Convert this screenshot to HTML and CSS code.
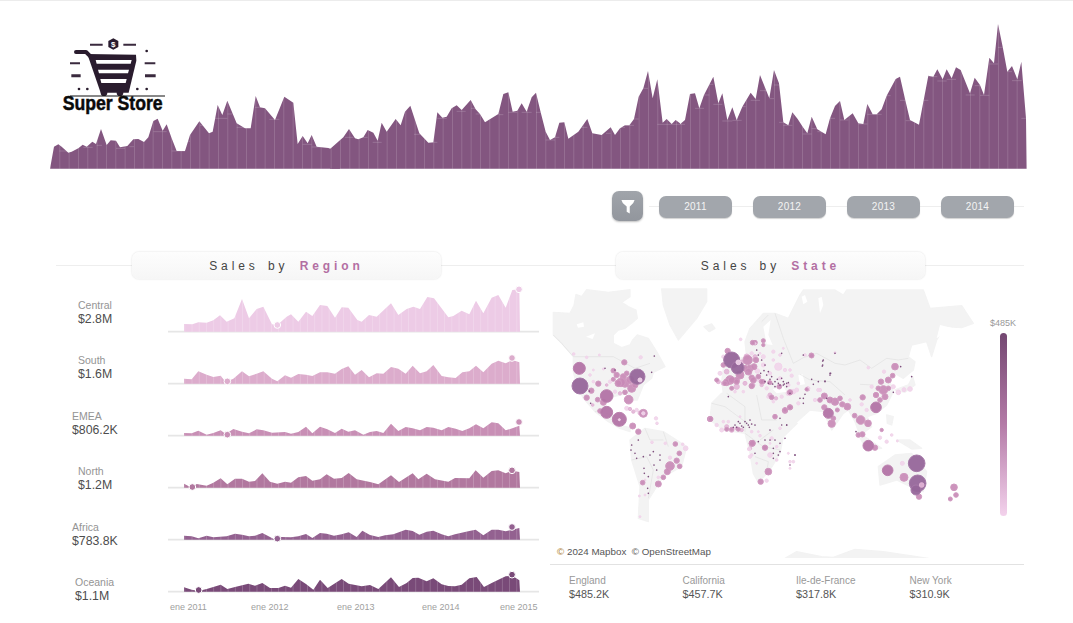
FILE: index.html
```html
<!DOCTYPE html>
<html lang="es">
<head>
<meta charset="utf-8">
<title>Super Store Sales</title>
<link rel="stylesheet" href="styles.css">
</head>
<body>
<svg class="defs" width="0" height="0" aria-hidden="true">
  <defs>
    <pattern id="weekLines" patternUnits="userSpaceOnUse" width="28" height="10" x="2">
      <rect width="2.6" height="10" fill="#fff" fill-opacity=".16"/>
    </pattern>
    <pattern id="monthLines" patternUnits="userSpaceOnUse" width="21.65" height="10" x="5">
      <rect width="2.6" height="10" fill="#fff" fill-opacity=".2"/>
    </pattern>
    <polygon id="s1" points="372,140 372,117 397,118 415,112 440,113 460,106 480,91 500,110 523,100 546,42 567,100 590,72 610,65 636,118 652,120 680,95 693,88 715,110 738,80 757,93 780,60 802,63 825,98 845,67 865,68 892,105 905,110 927,90 950,95 993,55 1015,90 1040,72 1060,65 1080,72 1102,36 1122,40 1165,97 1180,93 1205,77 1228,88 1248,47 1270,85 1295,38 1315,30 1337,68 1357,15 1378,13 1380,140"/>
    <polygon id="s2" points="372,295 372,280 395,282 415,258 440,268 460,275 482,271 497,290 520,280 546,258 567,273 590,265 610,258 636,280 652,288 675,270 693,277 715,266 738,268 757,272 780,261 802,261 825,265 845,251 865,243 885,268 905,254 927,276 950,264 970,265 993,245 1015,250 1037,265 1058,241 1080,264 1100,258 1120,239 1145,272 1165,276 1187,278 1207,261 1228,258 1248,241 1270,261 1295,235 1315,226 1337,234 1357,224 1378,231 1380,295"/>
    <polygon id="s3" points="372,452 372,444 395,445 415,437 440,449 460,444 482,436 497,447 520,432 546,440 567,445 590,433 610,436 636,443 675,441 693,446 715,441 738,425 757,445 780,425 802,433 825,444 845,431 865,440 885,436 910,449 930,441 950,438 970,444 993,416 1015,438 1037,426 1058,430 1080,436 1100,426 1120,428 1145,436 1165,426 1187,431 1207,438 1228,430 1248,418 1270,430 1295,412 1315,415 1337,436 1357,430 1378,422 1380,452"/>
    <polygon id="s4" points="372,115 372,103 385,110 397,114 410,104 440,109 460,100 482,87 502,105 525,88 546,88 567,97 585,95 607,72 630,97 652,103 675,97 693,100 715,84 738,80 757,94 780,90 800,75 822,88 845,86 866,71 890,90 930,98 955,105 993,78 1017,98 1058,72 1075,90 1100,73 1125,90 1165,97 1185,86 1228,87 1247,63 1270,85 1295,65 1315,63 1337,72 1357,64 1378,68 1380,115"/>
    <polygon id="s5" points="372,270 372,258 395,260 415,266 440,258 460,263 500,260 525,252 546,255 567,260 585,258 607,250 630,262 645,270 665,262 693,263 715,260 738,253 757,265 780,250 800,252 822,258 845,254 866,248 890,262 907,243 930,256 955,262 975,257 1000,254 1037,240 1058,244 1078,255 1100,246 1120,243 1145,254 1165,260 1185,254 1228,244 1247,240 1270,257 1295,240 1315,240 1337,245 1357,240 1378,235 1380,270"/>
    <polygon id="s6" points="372,426 372,413 395,420 415,424 440,418 460,412 482,405 502,418 525,412 565,402 585,408 607,400 630,415 655,415 675,408 693,414 715,388 738,403 760,420 780,390 803,415 845,388 866,402 905,410 930,406 955,418 993,383 1017,412 1040,400 1058,385 1075,384 1100,395 1120,386 1145,404 1165,409 1185,410 1205,405 1228,386 1250,382 1272,412 1295,400 1337,380 1357,378 1378,392 1380,426"/>
  </defs>
</svg>

<div class="page">
  <header class="hero">
    <svg class="trend" width="980" height="150" viewBox="50 20 980 150" role="img" aria-label="Sales over time">
      <g transform="translate(40 20) scale(.33333)">
        <polygon class="trend-fill" points="30,446 42,380 55,373 65,380 85,398 95,395 115,385 128,374 140,380 157,365 168,372 183,327 200,375 212,361 228,362 240,382 262,378 280,358 295,357 312,366 325,352 340,303 353,296 368,332 380,313 395,355 410,393 435,393 450,345 478,304 507,340 518,335 533,255 547,285 562,242 590,310 615,325 632,325 647,228 660,262 675,265 705,300 733,230 760,248 773,372 788,348 803,370 815,345 830,380 865,384 875,388 900,362 900,446"/>
        <polygon fill="url(#weekLines)" points="30,446 42,380 55,373 65,380 85,398 95,395 115,385 128,374 140,380 157,365 168,372 183,327 200,375 212,361 228,362 240,382 262,378 280,358 295,357 312,366 325,352 340,303 353,296 368,332 380,313 395,355 410,393 435,393 450,345 478,304 507,340 518,335 533,255 547,285 562,242 590,310 615,325 632,325 647,228 660,262 675,265 705,300 733,230 760,248 773,372 788,348 803,370 815,345 830,380 865,384 875,388 900,362 900,446"/>
        <path class="trend-steps" d="M58 393H88M130 382H158M170 376H186M228 385H255M268 380H282M340 335H380M395 393H435M437 364H450M480 316H495M520 295H562M562 282H578M590 322H632M645 262H675M688 298H718M788 373H815M815 381H842"/>
      </g>
      <g transform="translate(330 20) scale(.33333)">
        <polygon class="trend-fill" points="0,446 0,387 40,352 57,327 75,355 85,358 100,352 113,330 130,338 143,362 155,308 170,335 197,297 212,316 225,275 241,257 268,340 295,368 310,367 322,277 337,293 350,290 365,265 380,256 395,270 422,240 437,268 450,282 465,307 505,282 520,222 535,217 548,275 562,272 575,250 590,275 605,232 618,218 632,277 647,335 660,360 675,352 688,308 703,307 715,356 745,335 772,297 787,340 815,345 842,322 855,345 870,325 885,316 898,316 912,297 926,230 940,205 954,153 968,235 982,178 998,308 1010,297 1025,312 1037,300 1050,310 1050,446"/>
        <polygon fill="url(#weekLines)" points="0,446 0,387 40,352 57,327 75,355 85,358 100,352 113,330 130,338 143,362 155,308 170,335 197,297 212,316 225,275 241,257 268,340 295,368 310,367 322,277 337,293 350,290 365,265 380,256 395,270 422,240 437,268 450,282 465,307 505,282 520,222 535,217 548,275 562,272 575,250 590,275 605,232 618,218 632,277 647,335 660,360 675,352 688,308 703,307 715,356 745,335 772,297 787,340 815,345 842,322 855,345 870,325 885,316 898,316 912,297 926,230 940,205 954,153 968,235 982,178 998,308 1010,297 1025,312 1037,300 1050,310 1050,446"/>
        <path class="trend-steps" d="M45 352H70M100 352H113M128 367H155M252 343H270M295 367H322M322 295H350M380 274H407M423 265H437M437 282H450M505 284H520M535 277H562M575 277H605M618 277H632M647 360H675M675 352H688M745 322H772M828 340H842M870 322H885M885 316H912M912 297H926M940 205H954M982 313H1050"/>
      </g>
      <g transform="translate(680 20) scale(.33333)">
        <polygon class="trend-fill" points="0,446 0,313 15,300 30,222 45,220 58,265 72,225 100,170 115,250 127,220 142,300 157,262 170,300 187,260 212,218 227,237 240,165 268,235 282,150 297,190 310,307 325,316 337,277 353,297 368,320 382,340 395,290 412,328 437,343 450,295 465,258 480,243 493,300 518,280 535,310 550,312 562,252 578,283 590,283 605,268 620,227 647,177 660,170 677,245 690,300 717,314 745,167 760,170 772,148 788,178 800,148 815,175 828,142 842,150 870,220 884,173 900,195 912,225 928,113 942,130 954,12 968,80 982,155 996,138 1012,178 1024,125 1038,295 1040,446"/>
        <polygon fill="url(#weekLines)" points="0,446 0,313 15,300 30,222 45,220 58,265 72,225 100,170 115,250 127,220 142,300 157,262 170,300 187,260 212,218 227,237 240,165 268,235 282,150 297,190 310,307 325,316 337,277 353,297 368,320 382,340 395,290 412,328 437,343 450,295 465,258 480,243 493,300 518,280 535,310 550,312 562,252 578,283 590,283 605,268 620,227 647,177 660,170 677,245 690,300 717,314 745,167 760,170 772,148 788,178 800,148 815,175 828,142 842,150 870,220 884,173 900,195 912,225 928,113 942,130 954,12 968,80 982,155 996,138 1012,178 1024,125 1038,295 1040,446"/>
        <path class="trend-steps" d="M0 313H15M45 265H72M72 225H88M88 193H100M100 253H127M127 303H157M157 301H185M185 260H197M212 241H240M240 212H268M268 236H282M282 195H297M297 307H310M310 316H337M368 342H395M395 326H412M412 335H437M450 295H465M480 300H505M535 312H562M562 283H605M605 227H632M660 241H677M677 302H717M730 241H745M745 170H772M772 183H800M800 178H828M857 225H884M884 197H900M900 226H928M928 132H954M954 82H968M982 155H996M996 182H1025M1024 295H1040"/>
      </g>
    </svg>

    <svg class="logo" width="140" height="90" viewBox="0 0 420 270" role="img" aria-label="Super Store logo">
      <g class="logo-dash">
        <path d="M120 44H158M220 44H258"/>
        <path d="M60 100H90M284 100H316"/>
        <path class="logo-thick" d="M64 137H92M285 137H317"/>
      </g>
      <polygon class="logo-ink" points="190,25 205,33 205,51 190,59 175,51 175,33"/>
      <text class="logo-coin" x="190" y="50">$</text>
      <path class="logo-handle" d="M78 66H108L122 80"/>
      <polygon class="logo-ink" points="112,72 258,74 259,92 236,188 152,188"/>
      <polygon class="logo-slot" points="137,90 245,90 242,101 140,101"/>
      <polygon class="logo-slot" points="144,119 237,119 234,130 147,130"/>
      <polygon class="logo-slot" points="151,147 230,147 227,159 154,159"/>
      <circle class="logo-ink" cx="162" cy="188" r="10"/>
      <circle class="logo-ink" cx="210" cy="188" r="10"/>
      <g class="logo-ink">
        <circle cx="290" cy="63" r="4"/>
        <circle cx="87" cy="177" r="4"/>
        <circle cx="112" cy="177" r="4"/>
        <circle cx="262" cy="177" r="4"/>
        <circle cx="290" cy="177" r="4"/>
      </g>
      <path class="logo-rule" d="M60 198H345"/>
      <text class="logo-word" x="38" y="241" textLength="300" lengthAdjust="spacingAndGlyphs">Super Store</text>
    </svg>
  </header>

  <nav class="filters">
    <button class="filter-btn" type="button" aria-label="Filter">
      <svg width="14" height="15" viewBox="0 0 16 17"><path class="funnel" d="M0.5 1H15.5L14 4.5L10 8.5V16.5L6.5 14.5V8.5L2 4.5Z"/></svg>
    </button>
    <span class="pill">2011</span>
    <span class="pill">2012</span>
    <span class="pill">2013</span>
    <span class="pill">2014</span>
  </nav>

  <main class="panels">
    <section class="region-panel">
      <h2 class="title title-region">Sales by <b>Region</b></h2>
      <div class="region-body">
        <div class="region-labels">
          <div class="kpi"><span class="kpi-name">Central</span><span class="kpi-value">$2.8M</span></div>
          <div class="kpi"><span class="kpi-name">South</span><span class="kpi-value">$1.6M</span></div>
          <div class="kpi"><span class="kpi-name">EMEA</span><span class="kpi-value">$806.2K</span></div>
          <div class="kpi"><span class="kpi-name">North</span><span class="kpi-value">$1.2M</span></div>
          <div class="kpi"><span class="kpi-name">Africa</span><span class="kpi-value">$783.8K</span></div>
          <div class="kpi"><span class="kpi-name">Oceania</span><span class="kpi-value">$1.1M</span></div>
        </div>
        <div class="region-charts">
          <svg class="spark" viewBox="324 -12 1113 156">
            <path class="axis" d="M324 140H1437"/>
            <use href="#s1" class="c1"/><use href="#s1" fill="url(#monthLines)"/>
            <circle class="c1 dot" cx="652" cy="120" r="10"/><circle class="c1 dot" cx="1377" cy="13" r="10"/>
          </svg>
          <svg class="spark" viewBox="324 143 1113 156">
            <path class="axis" d="M324 295H1437"/>
            <use href="#s2" class="c2"/><use href="#s2" fill="url(#monthLines)"/>
            <circle class="c2 dot" cx="502" cy="288" r="10"/><circle class="c2 dot" cx="1356" cy="218" r="10"/>
          </svg>
          <svg class="spark" viewBox="324 300 1113 156">
            <path class="axis" d="M324 452H1437"/>
            <use href="#s3" class="c3"/><use href="#s3" fill="url(#monthLines)"/>
            <circle class="c3 dot" cx="502" cy="449" r="10"/><circle class="c3 dot" cx="1377" cy="411" r="10"/>
          </svg>
          <svg class="spark" viewBox="324 -37 1113 156">
            <path class="axis" d="M324 115H1437"/>
            <use href="#s4" class="c4"/><use href="#s4" fill="url(#monthLines)"/>
            <circle class="c4 dot" cx="397" cy="113" r="10"/><circle class="c4 dot" cx="1356" cy="63" r="10"/>
          </svg>
          <svg class="spark" viewBox="324 118 1113 156">
            <path class="axis" d="M324 270H1437"/>
            <use href="#s5" class="c5"/><use href="#s5" fill="url(#monthLines)"/>
            <circle class="c5 dot" cx="652" cy="267" r="10"/><circle class="c5 dot" cx="1356" cy="232" r="10"/>
          </svg>
          <svg class="spark" viewBox="324 274 1113 156">
            <path class="axis" d="M324 426H1437"/>
            <use href="#s6" class="c6"/><use href="#s6" fill="url(#monthLines)"/>
            <circle class="c6 dot" cx="416" cy="421" r="10"/><circle class="c6 dot" cx="1356" cy="375" r="10"/>
          </svg>
          <div class="time-axis">
            <span>ene 2011</span><span>ene 2012</span><span>ene 2013</span><span>ene 2014</span><span>ene 2015</span>
          </div>
        </div>
      </div>
    </section>

    <section class="state-panel">
      <h2 class="title title-state">Sales by <b>State</b></h2>
      <div class="map-stage">
        <svg class="map" width="435" height="273" viewBox="0 0 435 273" role="img" aria-label="World map of sales by state">
          <!-- land -->
          <g transform="scale(.33333)" class="land">
            <polygon points="10,82 60,85 72,62 78,28 95,35 110,14 175,22 240,14 240,35 215,52 235,65 258,75 262,100 245,115 225,130 205,135 190,150 190,175 215,188 240,180 248,165 262,150 295,160 320,200 345,245 310,262 305,280 280,300 262,345 248,345 235,325 190,335 170,350 160,380 190,395 205,420 240,428 240,440 210,430 175,410 135,380 100,340 80,300 70,260 70,215 35,175 10,150"/>
            <polygon points="335,12 470,12 470,50 440,100 385,165 360,120 340,60"/>
            <polygon points="462,125 485,117 495,130 478,140"/>
            <polygon points="705,820 740,800 815,815 850,817 915,793 1000,800 1135,820"/>
          </g>
          <g transform="translate(230 0) scale(.33333)" class="land">
            <polygon points="-90,130 -50,85 -15,85 25,100 60,30 70,15 165,15 190,30 200,15 430,15 450,70 545,62 580,115 545,128 495,125 470,165 455,215 440,170 395,180 385,215 405,230 400,255 370,280 345,265 330,290 340,320 320,360 290,385 262,395 275,425 255,440 245,465 225,410 205,375 190,385 155,435 130,380 90,375 40,420 5,430 -30,360 -45,335 -75,345 -100,325 -130,305 -170,325 -175,290 -170,250 -140,225 -100,215 -105,170"/>
            <polygon points="295,545 345,510 395,505 440,560 430,620 380,600 350,585 300,600"/>
            <polygon points="230,440 270,465 305,490 260,495"/>
            <polygon points="350,465 390,465 425,490 395,492"/>
            <polygon points="320,390 340,395 335,420 322,415"/>
            <polygon points="345,315 385,300 398,275 405,300 375,322"/>
          </g>
          <g transform="translate(140 55) scale(.33333)" class="land">
            <polygon points="95,160 150,140 200,165 240,160 272,180 300,250 322,250 280,290 270,340 240,390 205,428 190,400 180,340 165,280 100,270 60,240 65,190"/>
          </g>
          <g transform="translate(0 135) scale(.33333)" class="land">
            <polygon points="240,60 285,25 340,35 410,80 395,140 340,170 320,200 295,240 295,305 265,295 270,200 245,120"/>
          </g>
          <!-- inland water -->
          <g transform="scale(.33333)" class="water">
            <polygon points="80,118 100,112 102,125 84,128"/>
            <polygon points="108,155 135,145 128,162"/>
            <polygon points="640,125 662,105 655,150 668,180 650,178"/>
            <polygon points="668,312 700,305 710,320 680,325"/>
            <polygon points="745,270 758,268 765,298 750,300"/>
          </g>
          <g transform="translate(230 0) scale(.33333)" class="water">
            <polygon points="115,40 125,35 130,60 120,85"/>
            <polygon points="65,35 75,30 82,50 70,58"/>
            <polygon points="480,120 520,130 470,160"/>
          </g>
          <!-- borders -->
          <g transform="translate(230 0) scale(.33333)" class="borders">
            <path d="M40 235L70 218L110 205L165 235L195 240L240 225L275 250L320 220L355 225L385 220M60 268L90 285L150 290L195 330M240 298L280 300M-15 85L10 160L40 235M-55 110L-35 90"/>
          </g>
          <g transform="translate(140 55) scale(.33333)" class="borders">
            <path d="M110 160L165 200L165 275M200 165L215 240L260 240M65 190L105 200L165 245M165 280L220 320L270 330M195 350L235 365L230 395M210 300L250 270"/>
          </g>
          <g transform="translate(0 135) scale(.33333)" class="borders">
            <path d="M285 25L300 60L340 60M245 120L290 110L310 150L295 235M340 35L355 80"/>
          </g>
          <g transform="scale(.33333)" class="borders">
            <path d="M10 150L35 175L70 215H190L255 250L300 235M135 380L170 370"/>
          </g>

          <!-- bubbles -->
          <g transform="scale(.33333)">
            <g class="b1">
              <circle cx="71" cy="207" r="4"/><circle cx="110" cy="217" r="4"/><circle cx="148" cy="210" r="3"/><circle cx="272" cy="217" r="5"/>
              <circle cx="130" cy="255" r="3"/><circle cx="160" cy="252" r="3"/><circle cx="230" cy="370" r="6"/><circle cx="260" cy="375" r="5"/>
              <circle cx="318" cy="400" r="5"/><circle cx="321" cy="415" r="4"/><circle cx="520" cy="215" r="5"/><circle cx="640" cy="215" r="6"/>
              <circle cx="685" cy="245" r="11"/><circle cx="622" cy="258" r="7"/><circle cx="600" cy="262" r="6"/><circle cx="670" cy="200" r="5"/>
              <circle cx="700" cy="190" r="3"/><circle cx="605" cy="205" r="5"/><circle cx="572" cy="163" r="4"/><circle cx="500" cy="420" r="5"/>
              <circle cx="515" cy="435" r="6"/><circle cx="605" cy="440" r="4"/><circle cx="630" cy="452" r="4"/><circle cx="665" cy="460" r="5"/>
              <circle cx="570" cy="395" r="3"/><circle cx="690" cy="430" r="4"/><circle cx="655" cy="335" r="5"/><circle cx="670" cy="350" r="4"/>
              <circle cx="510" cy="265" r="6"/><circle cx="640" cy="240" r="6"/><circle cx="660" cy="265" r="5"/><circle cx="628" cy="285" r="6"/>
              <circle cx="650" cy="310" r="5"/><circle cx="690" cy="280" r="5"/><circle cx="715" cy="300" r="5"/><circle cx="705" cy="255" r="5"/>
              <circle cx="555" cy="320" r="4"/><circle cx="580" cy="320" r="4"/><circle cx="130" cy="290" r="4"/><circle cx="180" cy="290" r="5"/>
              <circle cx="195" cy="320" r="5"/><circle cx="120" cy="270" r="4"/>
            </g>
            <g class="b2">
              <circle cx="530" cy="260" r="7"/><circle cx="560" cy="305" r="8"/><circle cx="520" cy="295" r="6"/><circle cx="585" cy="295" r="6"/>
              <circle cx="575" cy="232" r="7"/><circle cx="615" cy="215" r="6"/><circle cx="635" cy="300" r="5"/><circle cx="170" cy="300" r="4"/>
              <circle cx="210" cy="325" r="5"/><circle cx="128" cy="360" r="4"/><circle cx="250" cy="380" r="5"/><circle cx="270" cy="384" r="6"/>
              <circle cx="240" cy="372" r="5"/><circle cx="660" cy="330" r="6"/><circle cx="678" cy="340" r="5"/><circle cx="530" cy="425" r="6"/>
              <circle cx="545" cy="435" r="7"/><circle cx="560" cy="430" r="5"/><circle cx="575" cy="435" r="5"/><circle cx="600" cy="490" r="5"/>
              <circle cx="505" cy="290" r="6"/><circle cx="590" cy="215" r="8"/><circle cx="610" cy="300" r="5"/><circle cx="658" cy="292" r="5"/>
            </g>
            <g class="b3">
              <circle cx="145" cy="296" r="8"/><circle cx="124" cy="317" r="8"/><circle cx="110" cy="338" r="8"/><circle cx="143" cy="344" r="7"/>
              <circle cx="160" cy="352" r="9"/><circle cx="150" cy="378" r="7"/><circle cx="223" cy="232" r="8"/><circle cx="190" cy="257" r="7"/>
              <circle cx="200" cy="270" r="8"/><circle cx="220" cy="275" r="9"/><circle cx="225" cy="295" r="12"/><circle cx="248" cy="423" r="9"/>
              <circle cx="265" cy="440" r="8"/><circle cx="225" cy="322" r="7"/><circle cx="245" cy="310" r="12"/><circle cx="213" cy="292" r="13"/>
              <circle cx="236" cy="344" r="13"/><circle cx="280" cy="385" r="12"/><circle cx="533" cy="198" r="8"/><circle cx="615" cy="173" r="7"/>
              <circle cx="640" cy="167" r="6"/><circle cx="705" cy="375" r="7"/><circle cx="675" cy="395" r="7"/><circle cx="480" cy="402" r="8"/>
              <circle cx="606" cy="475" r="9"/><circle cx="645" cy="488" r="7"/><circle cx="593" cy="225" r="14"/><circle cx="570" cy="270" r="12"/>
              <circle cx="540" cy="285" r="13"/><circle cx="530" cy="292" r="10"/><circle cx="605" cy="278" r="8"/><circle cx="600" cy="250" r="10"/>
              <circle cx="612" cy="245" r="9"/><circle cx="688" cy="305" r="7"/><circle cx="240" cy="285" r="11"/><circle cx="205" cy="295" r="10"/>
              <circle cx="520" cy="240" r="7"/><circle cx="618" cy="225" r="8"/><circle cx="585" cy="250" r="9"/><circle cx="625" cy="275" r="7"/>
              <circle cx="560" cy="285" r="8"/><circle cx="500" cy="285" r="6"/><circle cx="545" cy="310" r="6"/><circle cx="640" cy="290" r="6"/>
              <circle cx="255" cy="300" r="9"/><circle cx="230" cy="265" r="7"/><circle cx="190" cy="283" r="6"/>
            </g>
            <g class="b4">
              <circle cx="88" cy="250" r="18"/><circle cx="170" cy="333" r="19"/><circle cx="170" cy="382" r="18"/><circle cx="208" cy="403" r="21"/>
            </g>
            <g class="b5">
              <circle cx="90" cy="303" r="24"/><circle cx="262" cy="275" r="23"/><circle cx="545" cy="225" r="24"/><circle cx="563" cy="248" r="19"/>
            </g>
            <g class="b1">
              <circle cx="280" cy="385" r="5"/><circle cx="208" cy="404" r="3"/><circle cx="565" cy="232" r="7"/><circle cx="270" cy="285" r="6"/>
            </g>
          </g>
          <g transform="translate(230 0) scale(.33333)">
            <g class="b1">
              <circle cx="165" cy="203" r="3"/><circle cx="265" cy="248" r="4"/><circle cx="312" cy="260" r="5"/><circle cx="355" cy="322" r="7"/>
              <circle cx="372" cy="314" r="6"/><circle cx="390" cy="312" r="7"/><circle cx="367" cy="535" r="6"/><circle cx="320" cy="470" r="5"/>
              <circle cx="352" cy="468" r="3"/><circle cx="300" cy="458" r="5"/><circle cx="335" cy="450" r="4"/><circle cx="35" cy="272" r="5"/>
              <circle cx="30" cy="530" r="4"/><circle cx="40" cy="320" r="7"/><circle cx="25" cy="325" r="7"/><circle cx="245" cy="358" r="5"/>
              <circle cx="55" cy="355" r="5"/><circle cx="5" cy="335" r="5"/><circle cx="115" cy="315" r="5"/><circle cx="105" cy="345" r="5"/>
              <circle cx="275" cy="305" r="5"/><circle cx="340" cy="305" r="6"/><circle cx="260" cy="375" r="5"/><circle cx="210" cy="345" r="4"/>
            </g>
            <g class="b3">
              <circle cx="94" cy="211" r="7"/><circle cx="345" cy="245" r="10"/><circle cx="325" cy="285" r="9"/><circle cx="338" cy="272" r="7"/>
              <circle cx="303" cy="290" r="8"/><circle cx="310" cy="315" r="13"/><circle cx="288" cy="330" r="8"/><circle cx="315" cy="335" r="9"/>
              <circle cx="248" cy="337" r="8"/><circle cx="155" cy="416" r="11"/><circle cx="133" cy="333" r="9"/><circle cx="165" cy="350" r="11"/>
              <circle cx="150" cy="345" r="9"/><circle cx="133" cy="367" r="8"/><circle cx="187" cy="358" r="8"/><circle cx="202" cy="365" r="10"/>
              <circle cx="172" cy="375" r="6"/><circle cx="242" cy="405" r="13"/><circle cx="264" cy="415" r="10"/><circle cx="224" cy="392" r="7"/>
              <circle cx="247" cy="448" r="8"/><circle cx="235" cy="450" r="7"/><circle cx="285" cy="488" r="8"/><circle cx="305" cy="435" r="5"/>
              <circle cx="372" cy="577" r="12"/><circle cx="417" cy="635" r="8"/><circle cx="522" cy="607" r="10"/><circle cx="528" cy="630" r="7"/>
              <circle cx="511" cy="642" r="6"/><circle cx="30" cy="367" r="8"/><circle cx="15" cy="377" r="8"/><circle cx="83" cy="312" r="6"/>
              <circle cx="120" cy="345" r="7"/><circle cx="180" cy="340" r="7"/><circle cx="295" cy="310" r="7"/><circle cx="325" cy="310" r="7"/>
              <circle cx="300" cy="345" r="7"/><circle cx="160" cy="400" r="7"/>
            </g>
            <g class="b4">
              <circle cx="288" cy="367" r="16"/><circle cx="145" cy="385" r="15"/><circle cx="265" cy="482" r="16"/><circle cx="323" cy="556" r="16"/>
            </g>
            <g class="b5">
              <circle cx="410" cy="535" r="25"/><circle cx="413" cy="595" r="25"/><circle cx="408" cy="615" r="15"/>
            </g>
            <g class="b2"><circle cx="425" cy="600" r="7"/></g>
          </g>
          <g transform="translate(0 135) scale(.33333)">
            <g class="b1">
              <circle cx="360" cy="113" r="5"/><circle cx="306" cy="67" r="4"/><circle cx="346" cy="70" r="4"/><circle cx="407" cy="85" r="7"/>
              <circle cx="398" cy="73" r="4"/><circle cx="285" cy="225" r="3"/><circle cx="268" cy="228" r="3"/><circle cx="270" cy="290" r="3"/>
              <circle cx="285" cy="180" r="3"/><circle cx="660" cy="105" r="7"/><circle cx="597" cy="87" r="5"/><circle cx="605" cy="105" r="4"/>
              <circle cx="650" cy="182" r="5"/><circle cx="680" cy="120" r="4"/><circle cx="325" cy="172" r="4"/>
            </g>
            <g class="b3">
              <circle cx="360" cy="138" r="13"/><circle cx="352" cy="155" r="9"/><circle cx="380" cy="122" r="8"/><circle cx="389" cy="139" r="7"/>
              <circle cx="388" cy="100" r="7"/><circle cx="376" cy="72" r="7"/><circle cx="325" cy="192" r="9"/><circle cx="278" cy="188" r="7"/>
              <circle cx="340" cy="172" r="7"/><circle cx="607" cy="70" r="9"/><circle cx="645" cy="83" r="8"/><circle cx="632" cy="185" r="8"/>
              <circle cx="655" cy="155" r="10"/>
            </g>
          </g>
          <g transform="translate(140 55) scale(.33333)">
            <g class="b1">
              <circle cx="195" cy="10" r="3"/><circle cx="210" cy="40" r="3"/><circle cx="250" cy="60" r="4"/><circle cx="270" cy="45" r="4"/>
              <circle cx="300" cy="90" r="4"/><circle cx="345" cy="45" r="4"/><circle cx="320" cy="150" r="6"/><circle cx="355" cy="145" r="5"/>
              <circle cx="390" cy="150" r="5"/><circle cx="325" cy="130" r="4"/><circle cx="115" cy="245" r="4"/><circle cx="100" cy="245" r="4"/>
              <circle cx="205" cy="275" r="3"/><circle cx="180" cy="350" r="5"/><circle cx="200" cy="370" r="3"/><circle cx="240" cy="310" r="3"/>
              <circle cx="260" cy="320" r="4"/><circle cx="310" cy="365" r="4"/><circle cx="300" cy="385" r="3"/><circle cx="295" cy="340" r="3"/>
            </g>
            <g class="b3">
              <circle cx="62" cy="237" r="7"/><circle cx="110" cy="268" r="6"/><circle cx="125" cy="268" r="6"/><circle cx="145" cy="268" r="6"/>
              <circle cx="285" cy="210" r="7"/><circle cx="300" cy="202" r="7"/><circle cx="245" cy="172" r="7"/><circle cx="300" cy="157" r="8"/>
              <circle cx="185" cy="138" r="8"/><circle cx="125" cy="120" r="10"/><circle cx="105" cy="130" r="7"/><circle cx="140" cy="125" r="8"/>
              <circle cx="215" cy="125" r="7"/><circle cx="240" cy="128" r="6"/><circle cx="190" cy="120" r="9"/><circle cx="175" cy="95" r="10"/>
              <circle cx="188" cy="8" r="7"/><circle cx="220" cy="15" r="5"/><circle cx="365" cy="47" r="7"/><circle cx="350" cy="148" r="5"/>
            </g>
            <path class="specks" d="M200 30h0M215 60h0M225 75h0M235 95h0M245 110h0M255 125h0M265 130h0M280 125h0M270 135h0M290 140h0M225 125h0M235 130h0M255 140h0M300 160h0M340 190h0M405 125h0M420 100h0M400 60h0M398 75h0M435 40h0M115 170h0M180 240h0M165 245h0M150 250h0M135 255h0M175 255h0M160 262h0M130 262h0M195 255h0M290 255h0M255 300h0M270 310h0M240 300h0M225 300h0M195 340h0M250 340h0M265 345h0M250 355h0M285 295h0M315 345h0M240 270h0M270 235h0M365 118h0M410 175h0M205 45h0M222 92h0M230 105h0M212 100h0M240 118h0M262 118h0M275 115h0M248 132h0M283 132h0M295 128h0M170 250h0M155 258h0M145 245h0M185 252h0M140 262h0M178 262h0"/>
          </g>
          <g transform="translate(0 135) scale(.33333)">
            <path class="specks" d="M245 75h0M243 90h0M255 100h0M260 115h0M280 110h0M300 105h0M310 95h0M283 160h0M295 170h0M293 205h0M295 220h0M282 145h0M312 135h0M330 120h0M320 150h0M330 105h0M265 60h0M625 65h0M690 95h0M670 85h0"/>
          </g>
          <g transform="translate(230 0) scale(.33333)">
            <path class="specks" d="M70 210h0M128 228h0M127 243h0M100 298h0M75 328h0M150 270h0M135 288h0M115 290h0M10 300h0M20 295h0M5 205h0M340 322h0M395 275h0M228 440h0M152 265h0M70 340h0M60 340h0M20 420h0M5 420h0M45 510h0M30 540h0M362 245h0"/>
          </g>
          <g transform="scale(.33333)">
            <path class="specks" d="M122 355h0M165 250h0M313 213h0M305 262h0M118 318h0M195 255h0"/>
          </g>
        </svg>
        <p class="credit"><span class="credit-mark">©</span> 2024 Mapbox&nbsp; © OpenStreetMap</p>
        <div class="legend">
          <span class="legend-max">$485K</span>
          <span class="legend-bar"></span>
        </div>
      </div>
      <ul class="top-states">
        <li class="top-state"><span class="top-name">England</span><span class="top-value">$485.2K</span></li>
        <li class="top-state"><span class="top-name">California</span><span class="top-value">$457.7K</span></li>
        <li class="top-state"><span class="top-name">Ile-de-France</span><span class="top-value">$317.8K</span></li>
        <li class="top-state"><span class="top-name">New York</span><span class="top-value">$310.9K</span></li>
      </ul>
    </section>
  </main>
</div>
</body>
</html>
```
FILE: styles.css
```css
* { box-sizing: border-box; }
html, body { margin: 0; padding: 0; background: #fff; }
body { font-family: "Liberation Sans", Arial, sans-serif; overflow: hidden; }
.defs { position: absolute; }
.page { width: 1073px; height: 623px; border-top: 1px solid #ececec; overflow: hidden; }

/* hero */
.hero { position: relative; height: 170px; padding: 19px 0 0 50px; }
.trend { display: block; }
.trend-fill { fill: #835680; }
.trend-steps { fill: none; stroke: #fff; stroke-opacity: .2; stroke-width: 2.6; }

.logo { position: absolute; left: 50px; top: 29px; }
.logo-ink { fill: #2a1c2e; }
.logo-dash path { fill: none; stroke: #3a2a3e; stroke-width: 6; }
.logo-dash .logo-thick { stroke-width: 9; }
.logo-handle { fill: none; stroke: #2a1c2e; stroke-width: 12; stroke-linecap: round; stroke-linejoin: round; }
.logo-slot { fill: #fff; }
.logo-coin { fill: #fff; font-size: 24px; font-weight: 700; text-anchor: middle; }
.logo-rule { stroke: #111; stroke-width: 3; fill: none; }
.logo-word { fill: #0a0a0a; stroke: #0a0a0a; stroke-width: 1.5; font-family: "Liberation Sans", Arial, sans-serif; font-weight: 700; font-size: 62px; }

/* filters */
.filters { position: relative; display: flex; align-items: center; gap: 21px; height: 30px; margin: 20px 0 0 612px; }
.filters::before { content: ""; position: absolute; left: 37px; width: 375px; top: 15px; height: 1px; background: #eeeeee; }
.filter-btn { position: relative; display: flex; align-items: center; justify-content: center; width: 31px; height: 30px; margin-right: -5px; padding: 0; border: 0; border-radius: 7px; background: linear-gradient(#a0a4aa, #92969d); box-shadow: 0 1px 2px rgba(0,0,0,.25); }
.funnel { fill: #fff; }
.pill { position: relative; width: 73px; height: 22px; margin-top: 2px; border-radius: 7px; background: #a2a6ac; box-shadow: 0 1px 1px rgba(0,0,0,.18); color: #f4f4f4; font-size: 10px; line-height: 22px; text-align: center; letter-spacing: .3px; }

/* panels */
.panels { position: relative; display: grid; grid-template-columns: 494px 474px; margin: 31px 0 0 56px; }
.panels::before { content: ""; position: absolute; left: 0; width: 968px; top: 13px; height: 1px; background: #eeeeee; }
.title { position: relative; display: flex; align-items: center; justify-content: center; width: 309px; height: 27px; margin: 0; border-radius: 7px; background: linear-gradient(#fdfdfd, #f6f6f6); box-shadow: 0 0 2px rgba(0,0,0,.16); color: #444; font-size: 12px; font-weight: 400; letter-spacing: 3.9px; word-spacing: 2px; white-space: pre; }
.title b { margin-left: 2px; color: #b36fa3; font-weight: 700; }
.title-region { margin-left: 76px; }
.title-state { margin-left: 66px; }

/* regions */
.region-body { display: flex; margin-top: 2px; }
.region-labels { display: flex; flex-direction: column; align-items: center; gap: 28.4px; width: 78px; padding-top: 18px; }
.kpi { display: flex; flex-direction: column; align-items: flex-start; width: 46px; height: 27px; }
.kpi:nth-child(1), .kpi:nth-child(2), .kpi:nth-child(4) { width: 34px; }
.kpi:nth-child(6) { width: 40px; }
.kpi-name { color: #949494; font-size: 10.5px; line-height: 13px; }
.kpi-value { color: #4d4d4d; font-size: 12.3px; line-height: 14px; }
.region-charts { width: 371px; margin-left: 34px; }
.spark { display: block; width: 371px; height: 52px; overflow: visible; }
.axis { fill: none; stroke: #e6e6e6; stroke-width: 5; }
.dot { stroke: #fff; stroke-width: 3; }
.c1 { fill: #edcbe6; }
.c2 { fill: #dcaccc; }
.c3 { fill: #c88fb5; }
.c4 { fill: #b1789f; }
.c5 { fill: #936190; }
.c6 { fill: #794a78; }
.time-axis { display: grid; grid-template-columns: 81px 86px 85px 78px auto; margin-top: 9px; padding-left: 2px; color: #a0a0a0; font-size: 9px; line-height: 11px; white-space: nowrap; }

/* map */
.state-panel { display: flex; flex-direction: column; }
.map-stage { position: relative; display: flex; margin-top: 6px; height: 273px; }
.map { display: block; flex: none; filter: blur(.4px); }
.land polygon { fill: #f3f3f3; stroke: #f3f3f3; stroke-width: 4; stroke-linejoin: round; }
.water polygon { fill: #fff; }
.borders path { fill: none; stroke: #d4d4d4; stroke-width: 1.2; }
.b1 circle, .b2 circle, .b3 circle, .b4 circle, .b5 circle { stroke-width: 3; }
.b1 { fill: #f1d4ea; stroke: #f1d4ea; fill-opacity: .9; }
.b2 { fill: #e2b5d6; stroke: #e2b5d6; fill-opacity: .9; }
.b3 { fill: #c88ab6; stroke: #d09ac0; fill-opacity: .92; }
.b4 { fill: #b273a5; stroke: #bb82ae; fill-opacity: .95; }
.b5 { fill: #96669a; stroke: #a678a8; fill-opacity: .95; }
.specks { fill: none; stroke: #7d4d7c; stroke-width: 5; stroke-linecap: round; }
.credit { position: absolute; left: 6px; top: 260px; margin: 0; padding: 0 1px; background: rgba(255,255,255,.85); color: #555; font-size: 9.8px; line-height: 13px; white-space: nowrap; }
.credit-mark { color: #a9781f; }
.legend { display: flex; flex-direction: column; align-items: center; width: 36px; padding-top: 33px; }
.legend-max { color: #999; font-size: 9px; line-height: 11px; }
.legend-bar { display: block; width: 7px; height: 183px; margin-top: 4px; border-radius: 4px; background: linear-gradient(#744872, #b47ba7 50%, #f3d2ec); }

/* top states */
.top-states { display: grid; grid-template-columns: repeat(4, 113.5px); margin: 6px 0 0; padding: 10px 0 0 19px; border-top: 1px solid #e2e2e2; list-style: none; }
.top-state { display: flex; flex-direction: column; }
.top-name { color: #999; font-size: 10px; line-height: 12px; }
.top-value { color: #555; font-size: 10.8px; line-height: 14px; }
```
